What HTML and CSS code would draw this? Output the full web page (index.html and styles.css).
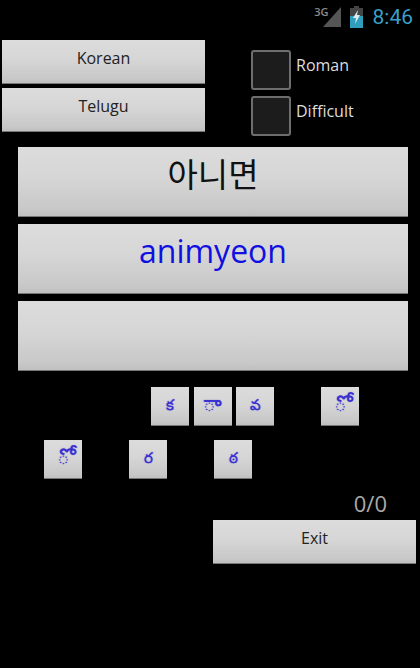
FILE: index.html
```html
<!DOCTYPE html>
<html lang="en">
<head>
    <meta charset="UTF-8">
    <meta name="viewport" content="width=device-width, initial-scale=1.0">
    <title>Korean Telugu</title>
    <link rel="stylesheet" href="styles.css">
</head>
<body>
    <div class="status-bar">
        <span class="net-type">3G</span>
        <svg class="signal" width="18" height="20" viewBox="0 0 18 20"><polygon points="18,0 18,20 0,20" fill="#555"/></svg>
        <svg class="battery" width="13" height="22" viewBox="0 0 13 22">
            <rect x="4" y="0" width="5" height="2" fill="#444"/>
            <rect x="0" y="2" width="13" height="8" fill="#444"/>
            <rect x="0" y="10" width="13" height="12" fill="#2f9dbb"/>
            <polygon points="8,4 3,12 6,12 5,18 10,9 7,9" fill="#d8eef5"/>
        </svg>
        <span class="clock">8:46</span>
    </div>

    <div class="top-section">
        <div class="lang-buttons">
            <button class="btn lang-btn">Korean</button>
            <button class="btn lang-btn">Telugu</button>
        </div>
        <div class="options">
            <label class="option"><span class="checkbox"></span>Roman</label>
            <label class="option"><span class="checkbox"></span>Difficult</label>
        </div>
    </div>

    <div class="card-list">
        <button class="btn card card-word">아니면</button>
        <button class="btn card card-roman">animyeon</button>
        <button class="btn card"></button>
    </div>

    <div class="key-row key-row-first">
        <button class="btn key">క</button>
        <button class="btn key key-mark">◌ా</button>
        <button class="btn key">వ</button>
        <span class="key-gap"></span>
        <button class="btn key key-mark">◌ో</button>
    </div>
    <div class="key-row key-row-second">
        <button class="btn key key-mark">◌ో</button>
        <span class="key-gap"></span>
        <button class="btn key">ర</button>
        <span class="key-gap"></span>
        <button class="btn key">ఠ</button>
    </div>

    <div class="score">0/0</div>
    <div class="footer">
        <button class="btn lang-btn">Exit</button>
    </div>
</body>
</html>
```

FILE: styles.css
```css
html, body {
    height: 100%;
}

body {
    margin: 0;
    background: #000;
    color: #ddd;
    font-family: "Open Sans", "Noto Sans", "Noto Sans CJK KR", sans-serif;
    overflow: hidden;
}

.status-bar {
    display: flex;
    align-items: flex-end;
    justify-content: flex-end;
    height: 29px;
    padding-right: 7px;
    box-sizing: border-box;
}

.net-type {
    align-self: flex-start;
    margin: 4px -6px 0 0;
    font-size: 11px;
    font-weight: 600;
    line-height: 15px;
    color: #8c8c8c;
}

.signal {
    margin: 0 9px 2px 0;
}

.battery {
    margin: 0 10px 1px 0;
}

.clock {
    font-family: Roboto, sans-serif;
    font-size: 21px;
    line-height: 24px;
    color: #3a9fca;
}

/* all the grey buttons share this look */
.btn {
    display: block;
    margin: 0;
    padding: 0;
    border: none;
    border-bottom: 1px solid #777;
    box-sizing: border-box;
    background: linear-gradient(180deg, #dcdcdd 0%, #d6d6d7 45%, #c8c8c8 90%, #c0c0c0 100%);
    color: #222;
    font-family: "Open Sans", "Noto Sans", "Noto Sans CJK KR", sans-serif;
}

.top-section {
    display: flex;
    margin-top: 11px;
}

.lang-buttons {
    display: flex;
    flex-direction: column;
    gap: 4px;
    margin-left: 2px;
}

.lang-btn {
    width: 203px;
    height: 44px;
    font-size: 16px;
    padding-bottom: 7px;
}

.options {
    display: flex;
    flex-direction: column;
    gap: 6px;
    margin: 10px 0 0 46px;
}

.option {
    display: flex;
    gap: 5px;
    height: 40px;
    font-size: 16px;
    line-height: 31px;
    color: #ddd;
}

.checkbox {
    width: 40px;
    height: 40px;
    box-sizing: border-box;
    border: 2px solid #6e6e6e;
    border-radius: 3px;
    background: #1c1c1c;
}

.card-list {
    display: flex;
    flex-direction: column;
    gap: 7.5px;
    margin: 11px 12px 0 18px;
}

.card {
    width: 100%;
    height: 69.5px;
}

.card-word {
    font-size: 33px;
    padding-bottom: 17px;
    color: #111;
}

.card-roman {
    font-size: 32px;
    padding-bottom: 15px;
    color: #1010e0;
}

.key-row {
    display: flex;
    gap: 4.5px;
}

.key-row-first {
    margin: 16px 0 0 151px;
}

.key-row-second {
    margin: 14px 0 0 44px;
}

.key, .key-gap {
    width: 38px;
    height: 39px;
}

.key {
    font-size: 15px;
    color: #3a30d0;
    text-shadow: 0 0 1px #3a30d0;
}

.key-mark {
    font-size: 22px;
    line-height: 30px;
    padding-bottom: 14px;
}

.score {
    margin: 9px 33px 0 0;
    text-align: right;
    font-size: 22px;
    line-height: 30px;
    color: #aaa;
}

.footer {
    display: flex;
    justify-content: flex-end;
    margin: 2px 4px 0 0;
}
```
